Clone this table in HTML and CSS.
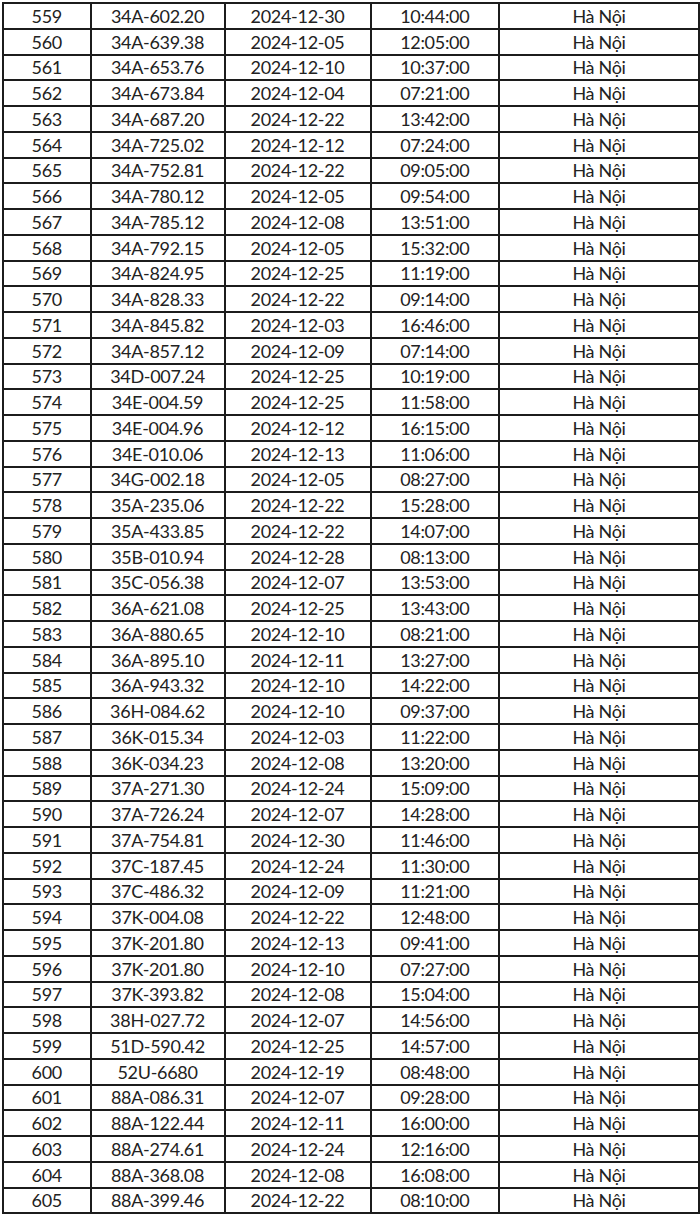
FILE: index.html
```html
<!DOCTYPE html>
<html lang="vi">
<head>
<meta charset="utf-8">
<link rel="stylesheet" href="styles.css">
</head>
<body>
<table class="sheet">
<colgroup>
<col class="c-no"><col class="c-plate"><col class="c-date"><col class="c-time"><col class="c-place">
</colgroup>
<tbody>
<tr><td>559</td><td>34A-602.20</td><td>2024-12-30</td><td>10:44:00</td><td>Hà Nội</td></tr>
<tr><td>560</td><td>34A-639.38</td><td>2024-12-05</td><td>12:05:00</td><td>Hà Nội</td></tr>
<tr><td>561</td><td>34A-653.76</td><td>2024-12-10</td><td>10:37:00</td><td>Hà Nội</td></tr>
<tr><td>562</td><td>34A-673.84</td><td>2024-12-04</td><td>07:21:00</td><td>Hà Nội</td></tr>
<tr><td>563</td><td>34A-687.20</td><td>2024-12-22</td><td>13:42:00</td><td>Hà Nội</td></tr>
<tr><td>564</td><td>34A-725.02</td><td>2024-12-12</td><td>07:24:00</td><td>Hà Nội</td></tr>
<tr><td>565</td><td>34A-752.81</td><td>2024-12-22</td><td>09:05:00</td><td>Hà Nội</td></tr>
<tr><td>566</td><td>34A-780.12</td><td>2024-12-05</td><td>09:54:00</td><td>Hà Nội</td></tr>
<tr><td>567</td><td>34A-785.12</td><td>2024-12-08</td><td>13:51:00</td><td>Hà Nội</td></tr>
<tr><td>568</td><td>34A-792.15</td><td>2024-12-05</td><td>15:32:00</td><td>Hà Nội</td></tr>
<tr><td>569</td><td>34A-824.95</td><td>2024-12-25</td><td>11:19:00</td><td>Hà Nội</td></tr>
<tr><td>570</td><td>34A-828.33</td><td>2024-12-22</td><td>09:14:00</td><td>Hà Nội</td></tr>
<tr><td>571</td><td>34A-845.82</td><td>2024-12-03</td><td>16:46:00</td><td>Hà Nội</td></tr>
<tr><td>572</td><td>34A-857.12</td><td>2024-12-09</td><td>07:14:00</td><td>Hà Nội</td></tr>
<tr><td>573</td><td>34D-007.24</td><td>2024-12-25</td><td>10:19:00</td><td>Hà Nội</td></tr>
<tr><td>574</td><td>34E-004.59</td><td>2024-12-25</td><td>11:58:00</td><td>Hà Nội</td></tr>
<tr><td>575</td><td>34E-004.96</td><td>2024-12-12</td><td>16:15:00</td><td>Hà Nội</td></tr>
<tr><td>576</td><td>34E-010.06</td><td>2024-12-13</td><td>11:06:00</td><td>Hà Nội</td></tr>
<tr><td>577</td><td>34G-002.18</td><td>2024-12-05</td><td>08:27:00</td><td>Hà Nội</td></tr>
<tr><td>578</td><td>35A-235.06</td><td>2024-12-22</td><td>15:28:00</td><td>Hà Nội</td></tr>
<tr><td>579</td><td>35A-433.85</td><td>2024-12-22</td><td>14:07:00</td><td>Hà Nội</td></tr>
<tr><td>580</td><td>35B-010.94</td><td>2024-12-28</td><td>08:13:00</td><td>Hà Nội</td></tr>
<tr><td>581</td><td>35C-056.38</td><td>2024-12-07</td><td>13:53:00</td><td>Hà Nội</td></tr>
<tr><td>582</td><td>36A-621.08</td><td>2024-12-25</td><td>13:43:00</td><td>Hà Nội</td></tr>
<tr><td>583</td><td>36A-880.65</td><td>2024-12-10</td><td>08:21:00</td><td>Hà Nội</td></tr>
<tr><td>584</td><td>36A-895.10</td><td>2024-12-11</td><td>13:27:00</td><td>Hà Nội</td></tr>
<tr><td>585</td><td>36A-943.32</td><td>2024-12-10</td><td>14:22:00</td><td>Hà Nội</td></tr>
<tr><td>586</td><td>36H-084.62</td><td>2024-12-10</td><td>09:37:00</td><td>Hà Nội</td></tr>
<tr><td>587</td><td>36K-015.34</td><td>2024-12-03</td><td>11:22:00</td><td>Hà Nội</td></tr>
<tr><td>588</td><td>36K-034.23</td><td>2024-12-08</td><td>13:20:00</td><td>Hà Nội</td></tr>
<tr><td>589</td><td>37A-271.30</td><td>2024-12-24</td><td>15:09:00</td><td>Hà Nội</td></tr>
<tr><td>590</td><td>37A-726.24</td><td>2024-12-07</td><td>14:28:00</td><td>Hà Nội</td></tr>
<tr><td>591</td><td>37A-754.81</td><td>2024-12-30</td><td>11:46:00</td><td>Hà Nội</td></tr>
<tr><td>592</td><td>37C-187.45</td><td>2024-12-24</td><td>11:30:00</td><td>Hà Nội</td></tr>
<tr><td>593</td><td>37C-486.32</td><td>2024-12-09</td><td>11:21:00</td><td>Hà Nội</td></tr>
<tr><td>594</td><td>37K-004.08</td><td>2024-12-22</td><td>12:48:00</td><td>Hà Nội</td></tr>
<tr><td>595</td><td>37K-201.80</td><td>2024-12-13</td><td>09:41:00</td><td>Hà Nội</td></tr>
<tr><td>596</td><td>37K-201.80</td><td>2024-12-10</td><td>07:27:00</td><td>Hà Nội</td></tr>
<tr><td>597</td><td>37K-393.82</td><td>2024-12-08</td><td>15:04:00</td><td>Hà Nội</td></tr>
<tr><td>598</td><td>38H-027.72</td><td>2024-12-07</td><td>14:56:00</td><td>Hà Nội</td></tr>
<tr><td>599</td><td>51D-590.42</td><td>2024-12-25</td><td>14:57:00</td><td>Hà Nội</td></tr>
<tr><td>600</td><td>52U-6680</td><td>2024-12-19</td><td>08:48:00</td><td>Hà Nội</td></tr>
<tr><td>601</td><td>88A-086.31</td><td>2024-12-07</td><td>09:28:00</td><td>Hà Nội</td></tr>
<tr><td>602</td><td>88A-122.44</td><td>2024-12-11</td><td>16:00:00</td><td>Hà Nội</td></tr>
<tr><td>603</td><td>88A-274.61</td><td>2024-12-24</td><td>12:16:00</td><td>Hà Nội</td></tr>
<tr><td>604</td><td>88A-368.08</td><td>2024-12-08</td><td>16:08:00</td><td>Hà Nội</td></tr>
<tr><td>605</td><td>88A-399.46</td><td>2024-12-22</td><td>08:10:00</td><td>Hà Nội</td></tr>
</tbody>
</table>
</body>
</html>
```
FILE: styles.css
```css
html, body {
  margin: 0;
  padding: 0;
  background: #ffffff;
}
body {
  padding: 2px 0 0 2px;
  font-family: Lato, "Liberation Sans", sans-serif;
  color: #222222;
}
.sheet {
  border-collapse: collapse;
  table-layout: fixed;
  width: 696px;
}
.c-no { width: 87.5px; }
.c-plate { width: 134px; }
.c-date { width: 146px; }
.c-time { width: 128.5px; }
.c-place { width: 200px; }
.sheet td {
  border: 2px solid #1c1c1c;
  height: 25.75px;
  padding: 0;
  box-sizing: border-box;
  text-align: center;
  vertical-align: middle;
  font-size: 18px;
  line-height: 20px;
  letter-spacing: -0.3px;
}
```
